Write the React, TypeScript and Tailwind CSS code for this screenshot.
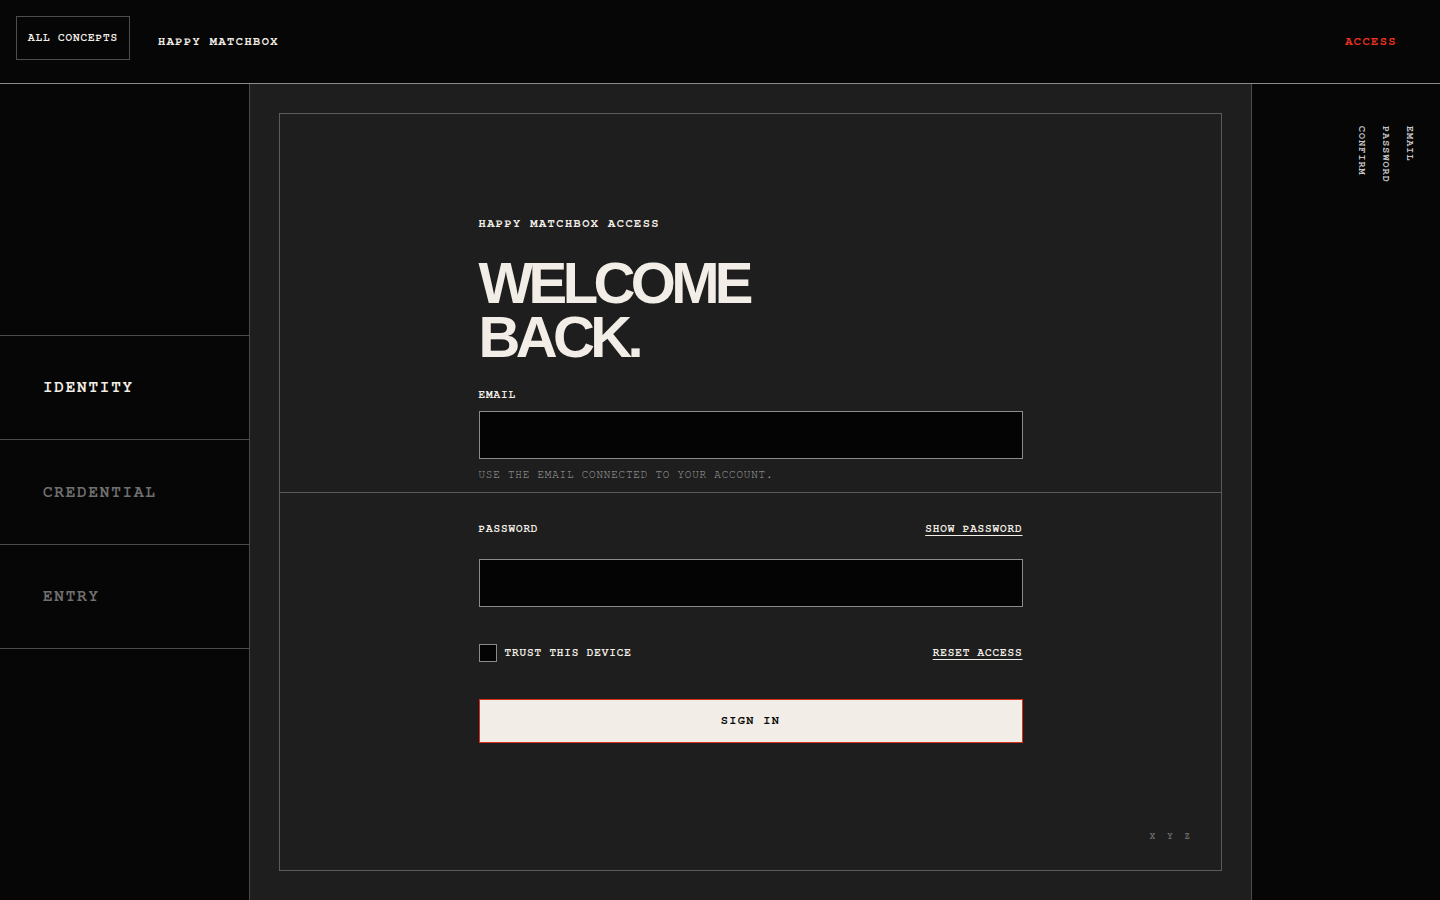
import React from 'react';

const mono = 'font-["TeX_Gyre_Cursor","FreeMono","Liberation_Mono",monospace]';

const steps = [
  { label: 'IDENTITY', active: true },
  { label: 'CREDENTIAL', active: false },
  { label: 'ENTRY', active: false },
];

function Header() {
  return (
    <header className="flex h-[84px] items-start border-b border-[#8a8a8a] bg-[#060606] px-4">
      <button className={`${mono} mt-4 h-[44px] w-[114px] border border-[#4d4d4d] pb-[2px] text-[11px] font-bold tracking-[0.08em] text-[#f2eee7]`}>
        ALL CONCEPTS
      </button>
      <div className={`${mono} ml-[28px] mt-[32px] text-[12px] font-bold leading-4 tracking-[0.12em] text-[#f2eee7]`}>
        HAPPY MATCHBOX
      </div>
      <div className="flex-1" />
      <a className={`${mono} mr-[27px] mt-[32px] text-[12px] font-bold leading-4 tracking-[0.12em] text-[#ec3320]`}>
        ACCESS
      </a>
    </header>
  );
}

function StepNav() {
  return (
    <aside className="flex w-[250px] shrink-0 flex-col border-r border-[#4a4a4a] bg-[#060606]">
      <div className="h-[252px] border-b border-[#4a4a4a]" />
      {steps.map((s) => (
        <div
          key={s.label}
          className={`${mono} flex h-[104.4px] items-center border-b border-[#4a4a4a] pb-[3px] pl-[43px] text-[16px] font-bold tracking-[0.11em] ${
            s.active ? 'text-[#f2eee7]' : 'text-[#6f6f6f]'
          }`}
        >
          {s.label}
        </div>
      ))}
    </aside>
  );
}

function Field({ label, right }: { label: string; right?: string }) {
  return (
    <div className="flex items-center justify-between">
      <span className={`${mono} text-[11px] font-bold leading-[14px] tracking-[0.08em] text-[#f2eee7]`}>{label}</span>
      {right && (
        <a className={`${mono} text-[11px] font-bold leading-[14px] tracking-[0.08em] text-[#f2eee7] underline underline-offset-[3px]`}>
          {right}
        </a>
      )}
    </div>
  );
}

function LoginCard() {
  return (
    <div className="flex h-full flex-col border border-[#5a5a5a]">
      {/* Identity section */}
      <div className="flex justify-center border-b border-[#5a5a5a] pb-[10px] pt-[100px]">
        <div className="w-[544px]">
          <div className={`${mono} text-[12px] font-bold leading-4 tracking-[0.12em] text-[#f2eee7]`}>
            HAPPY MATCHBOX ACCESS
          </div>
          <h1 className='mt-[26px] font-["Liberation_Sans",Arial,sans-serif] text-[58px] font-bold tracking-[-0.08em] text-[#f2eee7]'>
            <div className="h-[54px] leading-[54px]">WELCOME</div>
            <div className="h-[54px] leading-[54px]">BACK.</div>
          </h1>
          <div className="mt-[23px]">
            <Field label="EMAIL" />
          </div>
          <input className="mt-[10px] block h-[48px] w-full border border-[#8a8a8a] bg-[#040404] px-3 text-[#f2eee7] outline-none" />
          <p className={`${mono} mt-[9px] text-[11px] leading-[14px] tracking-[0.07em] text-[#a4a4a4]`}>
            USE THE EMAIL CONNECTED TO YOUR ACCOUNT.
          </p>
        </div>
      </div>

      {/* Credential section */}
      <div className="flex flex-1 flex-col items-center pt-[28px]">
        <div className="w-[544px]">
          <Field label="PASSWORD" right="SHOW PASSWORD" />
          <input
            type="password"
            className="mt-[24px] block h-[48px] w-full border border-[#8a8a8a] bg-[#040404] px-3 text-[#f2eee7] outline-none"
          />
          <div className="mt-[37px] flex h-[18px] items-center justify-between">
            <label className="flex items-center gap-[8px]">
              <span className="h-[18px] w-[18px] border border-[#8a8a8a] bg-[#040404]" />
              <span className={`${mono} pb-[2px] text-[11px] font-bold leading-[14px] tracking-[0.08em] text-[#f2eee7]`}>TRUST THIS DEVICE</span>
            </label>
            <a className={`${mono} pb-[2px] text-[11px] font-bold leading-[14px] tracking-[0.08em] text-[#f2eee7] underline underline-offset-[3px]`}>
              RESET ACCESS
            </a>
          </div>
          <button
            className={`${mono} mt-[37px] h-[44px] w-full border border-[#d9301c] bg-[#f2eee7] pb-[4px] text-[12px] font-bold tracking-[0.11em] text-[#0a0a0a]`}
          >
            SIGN IN
          </button>
        </div>
        <div className="flex-1" />
        <div className={`${mono} flex w-full justify-end gap-[12px] pb-[28px] pr-[31px] text-[9px] font-bold text-[#6a6a6a]`}>
          <span>X</span>
          <span>Y</span>
          <span>Z</span>
        </div>
      </div>
    </div>
  );
}

function ProgressRail() {
  return (
    <aside className="flex w-[189px] shrink-0 justify-end border-l border-[#4a4a4a] bg-[#060606] pr-[22px] pt-[42px]">
      <div className={`${mono} flex flex-row-reverse gap-[9px] text-[10px] font-bold tracking-[0.11em] text-[#c4c4c4]`}>
        <span className="[writing-mode:vertical-rl]">EMAIL</span>
        <span className="[writing-mode:vertical-rl]">PASSWORD</span>
        <span className="[writing-mode:vertical-rl]">CONFIRM</span>
      </div>
    </aside>
  );
}

export default function App() {
  return (
    <div className="flex h-[900px] w-[1440px] flex-col overflow-hidden bg-[#060606]">
      <Header />
      <div className="flex flex-1">
        <StepNav />
        <main className="flex-1 bg-[#1e1e1e] p-[29px]">
          <LoginCard />
        </main>
        <ProgressRail />
      </div>
    </div>
  );
}
